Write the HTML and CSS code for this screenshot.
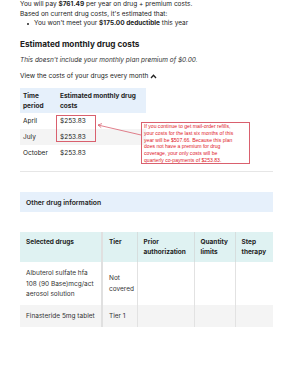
FILE: index.html
```html
<!DOCTYPE html>
<html>
<head>
<meta charset="utf-8">
<link rel="stylesheet" href="styles.css">
</head>
<body>
<div class="page">
  <p class="line">You will pay <b>$761.49</b> per year on drug + premium costs.</p>
  <p class="line">Based on current drug costs, it's estimated that:</p>
  <ul class="bullets">
    <li>You won't meet your <b>$175.00 deductible</b> this year</li>
  </ul>

  <h2 class="heading">Estimated monthly drug costs</h2>
  <p class="note">This doesn't include your monthly plan premium of $0.00.</p>
  <p class="toggle">View the costs of your drugs every month
    <svg class="caret" width="7" height="5" viewBox="0 0 7 5"><path d="M1 4 L3.5 1.3 L6 4" fill="none" stroke="#222" stroke-width="1.3"/></svg>
  </p>

  <div class="costs-wrap">
    <table class="costs">
      <colgroup><col class="k1"><col class="k2"></colgroup>
      <thead>
        <tr><th>Time<br>period</th><th>Estimated monthly drug<br>costs</th></tr>
      </thead>
      <tbody>
        <tr><td>April</td><td>$253.83</td></tr>
        <tr class="alt"><td>July</td><td>$253.83</td></tr>
        <tr><td>October</td><td>$253.83</td></tr>
      </tbody>
    </table>
    <div class="mark"></div>
    <svg class="arrow" width="50" height="16" viewBox="0 0 50 16">
      <path d="M2 2 L45 12" stroke="#d9606e" stroke-width="0.8" fill="none"/>
      <path d="M6 0.6 L2 2 L5.2 4.6" stroke="#d9606e" stroke-width="0.8" fill="none"/>
    </svg>
    <div class="callout">If you continue to get mail-order refills,<br>your costs for the last six months of this<br>year will be $507.66. Because this plan<br>does not have a premium for drug<br>coverage, your only costs will be<br>quarterly co-payments of $253.83.</div>
  </div>

  <hr class="rule">

  <div class="other">Other drug information</div>

  <table class="drugs">
    <colgroup>
      <col class="w1"><col class="w2"><col class="w3"><col class="w4"><col class="w5">
    </colgroup>
    <thead>
      <tr>
        <th>Selected drugs</th>
        <th>Tier</th>
        <th>Prior<br>authorization</th>
        <th>Quantity<br>limits</th>
        <th>Step<br>therapy</th>
      </tr>
    </thead>
    <tbody>
      <tr class="tall">
        <td>Albuterol sulfate hfa<br>108 (90 Base)mcg/act<br>aerosol solution</td>
        <td>Not<br>covered</td>
        <td></td><td></td><td></td>
      </tr>
      <tr class="alt short">
        <td>Finasteride 5mg tablet</td>
        <td>Tier 1</td>
        <td></td><td></td><td></td>
      </tr>
    </tbody>
  </table>
</div>
</body>
</html>
```
FILE: styles.css
```css
html, body {
  margin: 0;
  padding: 0;
  background: #fff;
}
body {
  font-family: Inter, "Noto Sans", sans-serif;
  color: #222;
  font-size: 6.5px;
  width: 293px;
}
.page {
  padding: 0 20px;
}
.line {
  margin: 0;
  line-height: 9.6px;
}
.line b, .bullets b {
  font-weight: 700;
}
.bullets {
  margin: 0;
  padding-left: 14px;
  line-height: 9.6px;
}
.bullets li {
  list-style: none;
  position: relative;
}
.bullets li::before {
  content: "";
  position: absolute;
  left: -7px;
  top: 4px;
  width: 2px;
  height: 2px;
  border-radius: 50%;
  background: #222;
}
.heading {
  margin: 10px 0 0;
  font-size: 8.2px;
  line-height: 11px;
  font-weight: 700;
}
.note {
  margin: 5.5px 0 0;
  font-style: italic;
  line-height: 10px;
  color: #333;
}
.toggle {
  margin: 6px 0 0;
  line-height: 10px;
  display: flex;
  align-items: center;
  gap: 2px;
}
.caret {
  display: block;
}
.costs-wrap {
  position: relative;
  margin-top: 7px;
}
.costs {
  border-collapse: collapse;
  table-layout: fixed;
  width: 126px;
}
.costs .k1 { width: 37px; }
.costs .k2 { width: 89px; }
.costs th {
  background: #e6f0fb;
  text-align: left;
  font-weight: 700;
  line-height: 10px;
  padding: 2.5px 3px;
  vertical-align: top;
}
.costs td {
  height: 16px;
  padding: 0 3px;
  line-height: 10px;
  vertical-align: middle;
}
.costs tr.alt td {
  background: #f4f4f4;
}
.mark {
  position: absolute;
  left: 36px;
  top: 27px;
  width: 40px;
  height: 27px;
  border: 1px solid #d9606e;
  box-sizing: border-box;
}
.arrow {
  position: absolute;
  left: 76px;
  top: 35px;
}
.callout {
  position: absolute;
  left: 121px;
  top: 34px;
  width: 109px;
  height: 42px;
  box-sizing: border-box;
  border: 1px solid #d9606e;
  padding: 0 2px;
  font-family: "Liberation Sans", Arial, sans-serif;
  font-size: 5.1px;
  line-height: 6.7px;
  color: #e0202a;
  white-space: nowrap;
}
.rule {
  margin: 10px 0 0;
  border: none;
  border-top: 1px solid #e6e6e6;
  height: 0;
}
.other {
  margin-top: 20px;
  height: 20px;
  background: #e6f0fb;
  padding-left: 6px;
  display: flex;
  align-items: center;
  font-size: 6.8px;
  font-weight: 600;
}
.drugs {
  margin-top: 20px;
  width: 253px;
  border-collapse: collapse;
  table-layout: fixed;
}
.drugs .w1 { width: 82px; }
.drugs .w2 { width: 35px; }
.drugs .w3 { width: 57px; }
.drugs .w4 { width: 41px; }
.drugs .w5 { width: 38px; }
.drugs th {
  background: #dff2f2;
  text-align: left;
  vertical-align: top;
  font-weight: 700;
  line-height: 10px;
  padding: 5px 6px;
  border-left: 1px solid #d6dede;
  overflow: hidden;
}
.drugs td {
  vertical-align: middle;
  line-height: 10.5px;
  padding: 0 6px;
  border-left: 1px solid #e2e2e2;
  color: #333;
  white-space: nowrap;
}
.drugs th:first-child, .drugs td:first-child {
  border-left: none;
}
.drugs th:nth-child(2), .drugs td:nth-child(2) {
  border-left: 2px solid #e0e0e0;
}
.drugs tr.tall td {
  height: 43px;
}
.drugs tr.short td {
  height: 22px;
}
.drugs tr.alt td {
  background: #f4f4f4;
}
```
